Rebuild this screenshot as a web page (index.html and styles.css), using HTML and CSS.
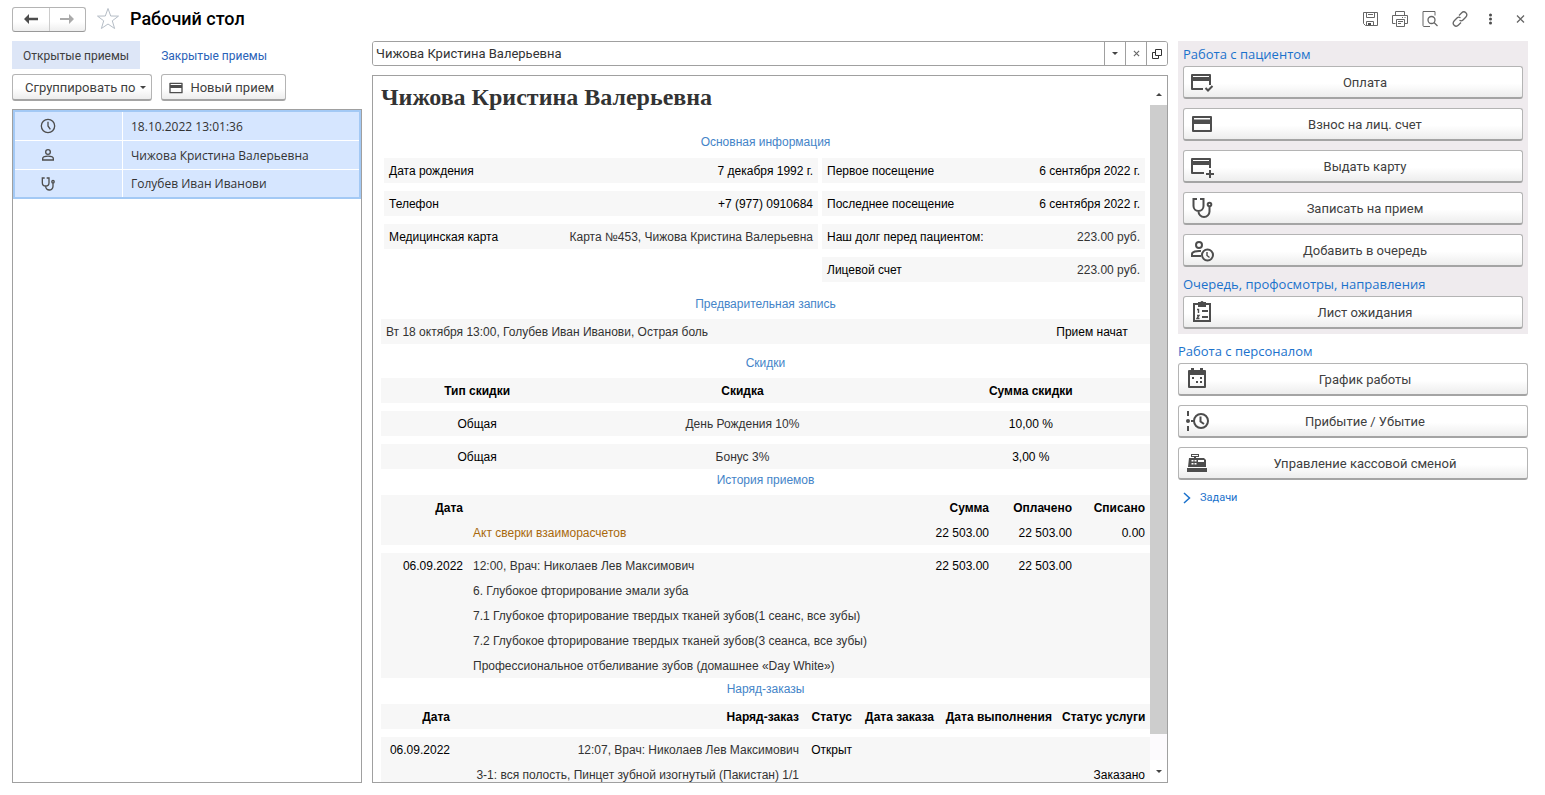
FILE: index.html
```
<!DOCTYPE html>
<html lang="ru">
<head>
<meta charset="utf-8">
<title>Рабочий стол</title>
<link rel="stylesheet" href="styles.css">
</head>
<body>
<svg class="defs" width="0" height="0" aria-hidden="true">
  <symbol id="i-card" viewBox="0 0 24 24"><path fill-rule="evenodd" d="M3 4h18a1 1 0 0 1 1 1v14a1 1 0 0 1-1 1H3a1 1 0 0 1-1-1V5a1 1 0 0 1 1-1zM4 6v1.500h16V6zM4 12v6h16v-6z"/></symbol>
  <symbol id="i-card-check" viewBox="0 0 24 24"><path fill-rule="evenodd" d="M2 4h18a1 1 0 0 1 1 1v10h-2v-4H3v7h10v2H2a1 1 0 0 1-1-1V5a1 1 0 0 1 1-1zM3 6v1h16V6z"/><path class="ln" d="M15.500 18l2.500 2.500 4.500-4.500"/></symbol>
  <symbol id="i-card-plus" viewBox="0 0 24 24"><path fill-rule="evenodd" d="M2 4h18a1 1 0 0 1 1 1v9h-2v-3H3v7h11v2H2a1 1 0 0 1-1-1V5a1 1 0 0 1 1-1zM3 6v1h16V6z"/><path class="ln" d="M20 16v8M16 20h8"/></symbol>
  <symbol id="i-steth" viewBox="0 0 24 24"><path class="ln" d="M7 3H3.500v7a5 5 0 0 0 10 0V3H10M8.500 15v.5a5.500 5.500 0 0 0 11 0v-5"/><circle class="ln" cx="19.500" cy="8.500" r="1.800"/></symbol>
  <symbol id="i-person" viewBox="0 0 24 24"><circle class="ln" cx="12" cy="7.500" r="3.500"/><path class="ln" d="M4 19.500v-2c0-5 16-5 16 0v2z"/></symbol>
  <symbol id="i-clock" viewBox="0 0 24 24"><circle class="ln" cx="12" cy="12" r="10"/><path class="ln" d="M12 5.500V12l3.500 5"/></symbol>
  <symbol id="i-queue" viewBox="0 0 24 24"><circle class="ln" cx="9" cy="7" r="3"/><path class="ln" d="M11 18H2v-2c0-2 4.500-3.500 9-3"/><circle class="ln" cx="17.500" cy="17" r="5.500"/><path class="ln thin" d="M17 14v3.500l2.500 2"/></symbol>
  <symbol id="i-list" viewBox="0 0 24 24"><path class="ln" d="M4 4h16v17H4z"/><path d="M8 2h2.500a1.600 1.600 0 0 1 3 0H16v5H8z"/><path class="ln thin" d="M7 9.500h1.500V13M7 15.500h2L7 18.500h2.500"/><path class="ln" d="M12 11h6M12 17h6"/></symbol>
  <symbol id="i-cal" viewBox="0 0 24 24"><path fill-rule="evenodd" d="M4 3h2V1h3v2h6V1h3v2h2a1 1 0 0 1 1 1v16a1 1 0 0 1-1 1H4a1 1 0 0 1-1-1V4a1 1 0 0 1 1-1zM5 8v11h14V8z"/><path d="M7 10h2v2H7zM15 10h2v2h-2zM11 14h2v2h-2zM15 14h2v2h-2z"/></symbol>
  <symbol id="i-arrive" viewBox="0 0 24 24"><path class="ln" d="M3 2v5M3 17v5"/><circle cx="3" cy="12" r="2"/><circle class="ln" cx="16" cy="12" r="7"/><path class="ln" d="M15.500 7.500v5l3.500 2.500M6 12h3"/></symbol>
  <symbol id="i-cash" viewBox="0 0 24 24"><path fill-rule="evenodd" d="M6 3h8v3h-3v1h8l2 2v7H3l1-9h5V6H6zM7 4v1h6V4zM6.500 9v1.500h2V9zM9.500 9v1.500h2V9zM6.500 12v1.500h2V12zM9.500 12v1.500h2V12zM13 9v2h6V9z"/><path d="M2 17h20v4H2z"/></symbol>
</svg>

<header class="topbar">
  <div class="nav">
    <button type="button" aria-label="Назад"><svg width="14" height="10" viewBox="0 0 14 10"><path d="M5 0v3.700h9v2.600H5V10L0 5z"/></svg></button>
    <button type="button" class="off" aria-label="Вперед"><svg width="14" height="10" viewBox="0 0 14 10"><path d="M9 0v4H0v2h9v4l5-5z"/></svg></button>
  </div>
  <button type="button" class="bare star" aria-label="Избранное"><svg width="24" height="24" viewBox="0 0 24 24"><path d="M12 1.500l2.700 7.500 7.800.1-6.200 4.700 2.300 7.700-6.600-4.500-6.600 4.500 2.300-7.700L1.500 9.100 9.300 9z"/></svg></button>
  <h1 class="title">Рабочий стол</h1>
  <div class="tools">
    <button type="button" class="bare" aria-label="Сохранить"><svg width="16" height="16" viewBox="0 0 16 16"><path class="o" d="M1.500 1.500h14v13h-12l-2-2zM4.500 1.500v5h8v-5M6 3.500h5M4.500 14.500v-4h7v4"/><path d="M6 12h3v2H6z"/></svg></button>
    <button type="button" class="bare" aria-label="Печать"><svg width="16" height="16" viewBox="0 0 16 16"><path class="o" d="M3.500 4.500v-4h9v4M3.500 12.500h-3v-8h15v8h-3M4.500 8.500h8v7h-8zM6 10.500h5M6 12.500h3M10 6.500h1M12.500 6.500h1"/></svg></button>
    <button type="button" class="bare" aria-label="Предварительный просмотр"><svg width="16" height="16" viewBox="0 0 16 16"><path class="o" d="M8 15.500H2a1 1 0 0 1-1-1V.5h12v4"/><circle class="o w" cx="9.500" cy="9" r="3.500"/><path class="o w" d="M12 11.500l3.500 3.500"/></svg></button>
    <button type="button" class="bare" aria-label="Ссылка"><svg width="16" height="16" viewBox="0 0 16 16"><path class="o w" d="M7 4.500l2.500-2.500c3-3 7.200 1 4.200 4.200L11 9c-1 1-2.500 1-3.500.3M9 11.500L6.500 14c-3 3-7.200-1-4.200-4.200L5 7c1-1 2.500-1 3.500-.3"/></svg></button>
    <button type="button" class="bare" aria-label="Еще"><svg width="16" height="16" viewBox="0 0 16 16"><circle cx="8.500" cy="4" r="1.500"/><circle cx="8.500" cy="8" r="1.500"/><circle cx="8.500" cy="12" r="1.500"/></svg></button>
    <button type="button" class="bare" aria-label="Закрыть"><svg width="16" height="16" viewBox="0 0 16 16"><path class="o w" d="M5 4.500l7 7M12 4.500l-7 7"/></svg></button>
  </div>
</header>

<main class="desk">
  <section class="left">
    <div class="tabs">
      <button type="button" class="tab active">Открытые приемы</button>
      <button type="button" class="tab">Закрытые приемы</button>
    </div>
    <div class="cmds">
      <button type="button" class="btn group">Сгруппировать по <i class="caret"></i></button>
      <button type="button" class="btn new"><svg class="ic16"><use href="#i-card"/></svg>Новый прием</button>
    </div>
    <div class="list">
      <table class="visits">
        <tr><td><svg class="ic16"><use href="#i-clock"/></svg></td><td>18.10.2022 13:01:36</td></tr>
        <tr><td><svg class="ic16"><use href="#i-person"/></svg></td><td>Чижова Кристина Валерьевна</td></tr>
        <tr><td><svg class="ic16"><use href="#i-steth"/></svg></td><td>Голубев Иван Иванови</td></tr>
      </table>
    </div>
  </section>

  <section class="center">
    <div class="picker">
      <input type="text" aria-label="Пациент" value="Чижова Кристина Валерьевна">
      <button type="button" aria-label="Выбрать"><i class="caret"></i></button>
      <button type="button" aria-label="Очистить"><svg width="7" height="7" viewBox="0 0 8 8"><path class="o w" d="M1 1l6 6M7 1L1 7"/></svg></button>
      <button type="button" aria-label="Открыть"><svg width="10" height="10" viewBox="0 0 10 10"><path class="o dark" d="M3.500.5h6v6h-6zM3 3.500H.5v6h6V7"/></svg></button>
    </div>
    <div class="report">
      <article class="sheet">
        <h2 class="patient">Чижова Кристина Валерьевна</h2>
        <h3>Основная информация</h3>
        <div class="info">
          <dl>
            <div><dt>Дата рождения</dt><dd>7 декабря 1992 г.</dd></div>
            <div><dt>Телефон</dt><dd>+7 (977) 0910684</dd></div>
            <div><dt>Медицинская карта</dt><dd class="soft">Карта №453, Чижова Кристина Валерьевна</dd></div>
          </dl>
          <dl>
            <div><dt>Первое посещение</dt><dd>6 сентября 2022 г.</dd></div>
            <div><dt>Последнее посещение</dt><dd>6 сентября 2022 г.</dd></div>
            <div><dt>Наш долг перед пациентом:</dt><dd class="soft">223.00 руб.</dd></div>
            <div><dt>Лицевой счет</dt><dd class="soft">223.00 руб.</dd></div>
          </dl>
        </div>
        <h3>Предварительная запись</h3>
        <table class="grid booking">
          <tr><td class="soft">Вт 18 октября 13:00, Голубев Иван Иванови, Острая боль</td><td class="state">Прием начат</td></tr>
        </table>
        <h3>Скидки</h3>
        <table class="grid discounts">
          <tr><th>Тип скидки</th><th>Скидка</th><th>Сумма скидки</th></tr>
          <tr class="gap"><td>Общая</td><td class="soft">День Рождения 10%</td><td>10,00 %</td></tr>
          <tr class="gap"><td>Общая</td><td class="soft">Бонус 3%</td><td>3,00 %</td></tr>
        </table>
        <h3>История приемов</h3>
        <table class="grid history">
          <colgroup><col class="c-date"><col><col class="c-sum"><col class="c-sum"><col class="c-off"></colgroup>
          <tr><th>Дата</th><th></th><th>Сумма</th><th>Оплачено</th><th>Списано</th></tr>
          <tr><td></td><td><a href="#" class="act">Акт сверки взаиморасчетов</a></td><td>22 503.00</td><td>22 503.00</td><td>0.00</td></tr>
          <tr class="gap"><td>06.09.2022</td><td class="soft">12:00, Врач: Николаев Лев Максимович</td><td>22 503.00</td><td>22 503.00</td><td></td></tr>
          <tr><td></td><td class="soft" colspan="4">6. Глубокое фторирование эмали зуба</td></tr>
          <tr><td></td><td class="soft" colspan="4">7.1 Глубокое фторирование твердых тканей зубов(1 сеанс, все зубы)</td></tr>
          <tr><td></td><td class="soft" colspan="4">7.2 Глубокое фторирование твердых тканей зубов(3 сеанса, все зубы)</td></tr>
          <tr><td></td><td class="soft" colspan="4">Профессиональное отбеливание зубов (домашнее «Day White»)</td></tr>
        </table>
        <h3>Наряд-заказы</h3>
        <table class="grid orders">
          <colgroup><col class="o-date"><col><col class="o-state"><col class="o-made"><col class="o-done"><col class="o-serv"></colgroup>
          <tr><th>Дата</th><th>Наряд-заказ</th><th>Статус</th><th>Дата заказа</th><th>Дата выполнения</th><th>Статус услуги</th></tr>
          <tr class="gap"><td>06.09.2022</td><td class="soft">12:07, Врач: Николаев Лев Максимович</td><td>Открыт</td><td></td><td></td><td></td></tr>
          <tr><td></td><td class="soft">3-1: вся полость, Пинцет зубной изогнутый (Пакистан) 1/1</td><td></td><td></td><td></td><td>Заказано</td></tr>
        </table>
      </article>
      <div class="scroll">
        <button type="button" aria-label="Вверх"><i class="caret up"></i></button>
        <div class="thumb"></div>
        <button type="button" class="down" aria-label="Вниз"><i class="caret"></i></button>
      </div>
    </div>
  </section>

  <aside class="right">
    <div class="panel">
      <h2>Работа с пациентом</h2>
      <button type="button" class="btn wide"><svg class="ic24"><use href="#i-card-check"/></svg><span>Оплата</span></button>
      <button type="button" class="btn wide"><svg class="ic24"><use href="#i-card"/></svg><span>Взнос на лиц. счет</span></button>
      <button type="button" class="btn wide"><svg class="ic24"><use href="#i-card-plus"/></svg><span>Выдать карту</span></button>
      <button type="button" class="btn wide"><svg class="ic24"><use href="#i-steth"/></svg><span>Записать на прием</span></button>
      <button type="button" class="btn wide"><svg class="ic24"><use href="#i-queue"/></svg><span>Добавить в очередь</span></button>
      <h2>Очередь, профосмотры, направления</h2>
      <button type="button" class="btn wide"><svg class="ic24"><use href="#i-list"/></svg><span>Лист ожидания</span></button>
    </div>
    <div class="staff">
      <h2>Работа с персоналом</h2>
      <button type="button" class="btn wide"><svg class="ic24"><use href="#i-cal"/></svg><span>График работы</span></button>
      <button type="button" class="btn wide"><svg class="ic24"><use href="#i-arrive"/></svg><span>Прибытие / Убытие</span></button>
      <button type="button" class="btn wide"><svg class="ic24"><use href="#i-cash"/></svg><span>Управление кассовой сменой</span></button>
    </div>
    <button type="button" class="bare tasks"><svg width="8" height="12" viewBox="0 0 8 12"><path d="M1 1l5.500 5L1 11"/></svg>Задачи</button>
  </aside>
</main>
</body>
</html>
```

FILE: styles.css
```
* { box-sizing: border-box; }
body {
  margin: 0;
  height: 100vh;
  display: flex;
  flex-direction: column;
  background: #fff;
  color: #404040;
  font: 13px/16px Roboto, "Liberation Sans", sans-serif;
  overflow: hidden;
}
h1, h2, h3, dl, dd { margin: 0; font-weight: normal; }
button { font: inherit; color: inherit; cursor: pointer; padding: 0; }
svg { fill: #4d4d4d; flex: none; }
.defs { position: absolute; }
.ln { fill: none; stroke: #4d4d4d; stroke-width: 2; }
.thin { stroke-width: 1.400; }
.o { fill: none; stroke: #666; stroke-width: 1; }
.w { stroke-width: 1.300; }
.dark { stroke: #333; }
.ic16 { width: 16px; height: 16px; }
.ic24 { width: 24px; height: 24px; }
.bare { border: 0; background: none; display: flex; align-items: center; }
.caret {
  display: inline-block;
  border: 3px solid transparent;
  border-top-color: #444;
  border-bottom: 0;
}
.caret.up { border-top: 0; border-bottom: 3px solid #444; }

.topbar { display: flex; align-items: center; height: 41px; padding: 0 17px 3px 12px; flex: none; }
.nav {
  display: flex;
  width: 74px;
  height: 25px;
  border: 1px solid #b4b4b4;
  border-bottom-color: #999;
  border-radius: 3px;
  background: linear-gradient(#fff 60%, #eee);
}
.nav button { flex: 1; border: 0; background: none; display: flex; align-items: center; justify-content: center; }
.nav .off { border-left: 1px solid #ccc; }
.off svg { fill: #aaa; }
.star { margin: 0 10px; }
.star svg { fill: none; stroke: #b5bdc6; }
.title { font-size: 18px; line-height: 24px; color: #000; font-weight: 500; }
.tools { display: flex; gap: 14px; margin-left: auto; }

.desk { flex: 1; min-height: 0; display: flex; gap: 10px; padding: 0 17px 12px 12px; }
.left, .right { width: 350px; flex: none; display: flex; flex-direction: column; }
.center { flex: 1; min-width: 0; display: flex; flex-direction: column; gap: 9px; }

.tabs { display: flex; gap: 10px; }
.tab { height: 28px; padding: 1px 11px 0; border: 0; background: none; color: #2a62b8; font-size: 12px; }
.tab.active { background: #dde6f7; color: #404040; }
.cmds { display: flex; gap: 9px; margin: 5px 0 8px; }
.btn {
  display: flex;
  align-items: center;
  border: 1px solid #b4b4b4;
  border-bottom: 2px solid #a4a4a4;
  border-radius: 3px;
  background: linear-gradient(#fff 55%, #ededed);
}
.cmds .btn { height: 27px; }
.group { padding: 1px 5px 0 12px; gap: 5px; }
.new { padding: 1px 11px 0 6px; gap: 6px; }

.list { flex: 1; border: 1px solid #a0a0a0; }
.visits { width: 100%; border-spacing: 0; border: 2px solid #a3c9f5; background: #d6e6ff; color: #333; }
.visits td { height: 29px; padding: 0 8px; border-bottom: 1px solid #fff; font: 12px "Open Sans", "Liberation Sans", sans-serif; }
.visits tr:last-child td { height: 27px; border-bottom: 0; }
.visits td:first-child { width: 108px; padding: 0; border-right: 1px solid #fff; }
.visits svg { display: block; margin: 0 0 0 25px; }

.picker { display: flex; height: 25px; border: 1px solid #a0a0a0; border-radius: 3px; overflow: hidden; }
.picker input { flex: 1; min-width: 0; border: 0; outline: 0; padding: 0 3px; font: inherit; color: #333; }
.picker button { width: 21px; border: 0; border-left: 1px solid #a0a0a0; background: #fff; display: flex; align-items: center; justify-content: center; }

.report { flex: 1; min-height: 0; display: flex; border: 1px solid #a0a0a0; overflow: hidden; }
.sheet { flex: 1; min-width: 0; padding-left: 8px; overflow: hidden; font: 12px/24px "Liberation Sans", Arial, sans-serif; color: #000; }
.patient { font: bold 24px/28px "Liberation Serif", "Times New Roman", serif; color: #333; padding: 7px 0 20px; }
.sheet h3 { font-size: 12px; line-height: 22px; padding-bottom: 4px; text-align: center; color: #4484c8; }
.soft { color: #333; }
.info { display: grid; grid-template-columns: 434fr 323fr; gap: 4px; padding: 1px 5px 3px 3px; }
.info dl > div { display: flex; justify-content: space-between; background: #f7f7f7; padding: 1px 5px 0; margin-bottom: 8px; white-space: nowrap; }
.grid { width: 100%; border-spacing: 0; table-layout: fixed; }
.grid td, .grid th { height: 25px; padding: 1px 5px 0; background: #f7f7f7; white-space: nowrap; text-align: right; }
.grid .gap td { height: 33px; border-top: 8px solid #fff; }
.booking { margin-bottom: 8px; }
.grid.booking td:first-child { text-align: left; }
.grid .state { width: 116px; text-align: center; }
.grid.discounts td, .grid.discounts th { text-align: center; }
.discounts th:first-child { width: 25%; }
.discounts th:last-child { width: 31%; }
.grid.history td:nth-child(2) { text-align: left; }
.c-date { width: 87px; }
.c-sum { width: 83px; }
.c-off { width: 73px; }
.o-date { width: 74px; }
.o-state { width: 53px; }
.o-made { width: 82px; }
.o-done { width: 118px; }
.o-serv { width: 93px; }
.act { color: #a8690c; text-decoration: none; }

.scroll { width: 17px; display: flex; flex-direction: column; background: #fcfafd; }
.scroll button { height: 29px; padding-top: 8px; border: 0; background: #fff; display: flex; align-items: center; justify-content: center; }
.scroll .down { height: 22px; padding: 0; }
.thumb { flex: 1; background: #cdcdcd; margin-bottom: 26px; }

.panel { background: #efebee; padding: 5px; }
.right h2 { font: 13px/16px "Open Sans", "Noto Sans", sans-serif; color: #1b72cc; padding-bottom: 4px; }
.wide { width: 100%; height: 33px; margin-bottom: 9px; padding: 0 6px; }
.wide span { flex: 1; text-align: center; padding-top: 1px; }
.panel .wide:last-child { margin-bottom: 0; }
.staff { margin-top: 9px; }
.tasks { gap: 9px; padding: 1px 0 0 5px; color: #1b72cc; font-size: 11px; align-self: flex-start; }
.tasks svg { fill: none; stroke: #1b72cc; stroke-width: 1.500; }
```
